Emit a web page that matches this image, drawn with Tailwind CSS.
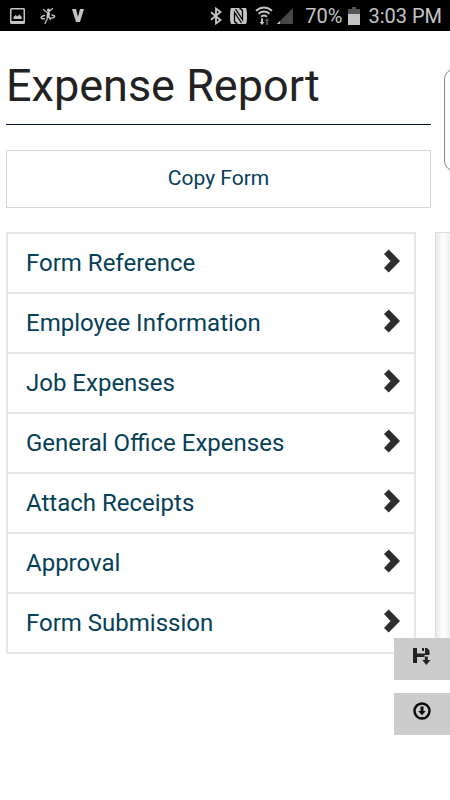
<!DOCTYPE html>
<html lang="en">
<head>
<meta charset="utf-8">
<meta name="viewport" content="width=device-width, initial-scale=1">
<title>Expense Report</title>
<script src="https://cdn.jsdelivr.net/npm/@tailwindcss/browser@4"></script>
</head>
<body class="min-h-screen bg-white font-['Roboto','Liberation_Sans',sans-serif] text-[#222]">
<svg class="hidden" aria-hidden="true">
  <symbol id="chevron" viewBox="0 0 16 24"><path d="M4.700 .5 16 12 4.700 23.500 0 18.900 6.500 12 0 5.100Z" fill="#2d2d2d"/></symbol>
</svg>

<header class="flex h-[31px] items-center justify-between bg-black pr-2 pl-2.5 text-[#c4c4c4]">
  <div class="flex items-center gap-[15px]">
    <svg class="h-4 w-[15px]" viewBox="0 0 15 16" aria-label="Picture"><path fill="currentColor" fill-rule="evenodd" d="M1.500 0h12Q15 0 15 1.500v13q0 1.500-1.500 1.500h-12Q0 16 0 14.500v-13Q0 0 1.500 0ZM1.500 1.500v11.500h12V1.500Z"/><path fill="currentColor" d="M3.500 11V9l2.200-2 1.600 1.500L9.500 6.500l2.200 2.500v2Z"/></svg>
    <svg class="h-[18px] w-4" viewBox="0 0 16 18" fill="none" stroke="currentColor" stroke-linecap="round" aria-label="Activity"><circle cx="8.500" cy="3" r="1.600" fill="currentColor" stroke="none"/><path stroke-width="1.200" d="M3.500 2.500 7.500 6l5-4.500M7.500 9.500l-.5 3-2 4M8.500 9.500l2 3"/><path stroke-width="3" d="M8.500 6.500 8 9.500"/><path stroke-width="1.400" d="M4.500 8.500C0 9.500 0 12 4.500 11.800M9.500 11.500C15 11 16.500 9 12 8"/></svg>
    <svg class="h-[15px] w-[14px]" viewBox="0 0 14 15" aria-label="V"><path d="M1 1h4l2 8 2-8h4L9 14H5Z" fill="currentColor"/></svg>
  </div>
  <div class="flex items-center">
    <svg class="mr-2 h-[18px] w-3" viewBox="0 0 12 18" fill="none" stroke="currentColor" stroke-width="1.800" aria-label="Bluetooth"><path d="M1 5.300 10.500 13 6 16.500v-15L10.500 5 1 12.700"/></svg>
    <svg class="mr-2 h-4 w-[17px]" viewBox="0 0 17 16" aria-label="NFC"><path fill="currentColor" d="M1 0h15q1 2 1 8t-1 8H1q-1-2-1-8t1-8Z"/><path fill="none" stroke="#000" stroke-width="1.300" d="M7.500 15.500Q4.500 15 4.500 12.500V4.500L11.500 15M9.500 .5Q12.500 1 12.500 3.500v8L5.500 1"/></svg>
    <svg class="mr-1 h-[19px] w-[18px]" viewBox="0 0 18 19" fill="none" stroke="currentColor" stroke-width="1.800" aria-label="Wi-Fi"><path d="M1 4.800q8-6.500 16 0M3.500 7.800q5.500-4.500 11 0M6 10.800q3-2.500 6 0"/><path fill="currentColor" stroke="none" d="M6 12.500h2V16h1.500L7 19l-2.500-3H6Z"/><path fill="#555" stroke="none" d="M11 19h2v-4h1.500L12 12l-2.500 3H11Z"/></svg>
    <svg class="mr-3 h-4 w-4" viewBox="0 0 16 16" aria-label="Signal"><path fill="#484848" d="M16 0v16H0Z"/><path fill="currentColor" d="M3 13v3H0Z"/></svg>
    <span class="text-xl leading-5">70%</span>
    <svg class="mr-2 ml-1.5 h-[18px] w-3" viewBox="0 0 12 18" aria-label="Battery"><path fill="#555" d="M4 0h4v2h4v5H0V2h4Z"/><path fill="currentColor" d="M0 7h12v11H0Z"/></svg>
    <time class="text-xl leading-5">3:03 PM</time>
  </div>
</header>

<main class="pt-7 pl-1.5">
  <section class="flex">
    <div class="min-w-0 flex-1">
      <h1 class="border-b border-[#06112e] pb-3 text-[45px] leading-[53px] whitespace-nowrap">Expense Report</h1>
      <button type="button" class="mt-[25px] block h-[58px] w-full cursor-pointer border border-[#d6d6d6] text-[21px] text-[#063e58]">Copy Form</button>
    </div>
    <div class="mt-2.5 ml-[13px] h-[102px] w-1.5 overflow-hidden"><div class="h-full w-8 rounded-[10px] border border-[#888]"></div></div>
  </section>

  <section class="mt-6 flex">
    <nav class="min-w-0 flex-1 border-2 border-[#e6e6e6]" aria-label="Form sections">
      <ul class="divide-y-2 divide-[#e6e6e6] text-2xl leading-[58px] text-[#063f58]">
        <li><a href="#reference" class="flex h-[58px] items-center justify-between pr-3.5 pl-[18px]">Form Reference<svg class="mb-1 h-6 w-4"><use href="#chevron"/></svg></a></li>
        <li><a href="#employee" class="flex h-[58px] items-center justify-between pr-3.5 pl-[18px]">Employee Information<svg class="mb-1 h-6 w-4"><use href="#chevron"/></svg></a></li>
        <li><a href="#job" class="flex h-[58px] items-center justify-between pr-3.5 pl-[18px]">Job Expenses<svg class="mb-1 h-6 w-4"><use href="#chevron"/></svg></a></li>
        <li><a href="#office" class="flex h-[58px] items-center justify-between pr-3.5 pl-[18px]">General Office Expenses<svg class="mb-1 h-6 w-4"><use href="#chevron"/></svg></a></li>
        <li><a href="#receipts" class="flex h-[58px] items-center justify-between pr-3.5 pl-[18px]">Attach Receipts<svg class="mb-1 h-6 w-4"><use href="#chevron"/></svg></a></li>
        <li><a href="#approval" class="flex h-[58px] items-center justify-between pr-3.5 pl-[18px]">Approval<svg class="mb-1 h-6 w-4"><use href="#chevron"/></svg></a></li>
        <li><a href="#submission" class="flex h-[58px] items-center justify-between pr-3.5 pl-[18px]">Form Submission<svg class="mb-1 h-6 w-4"><use href="#chevron"/></svg></a></li>
      </ul>
    </nav>
    <div class="ml-[19px] w-[15px] border-t border-l border-[#dcdcdc] bg-linear-to-r from-[#e8e8e8] via-white to-[#efefef]"></div>
  </section>
</main>

<div class="fixed right-0 bottom-[65px] flex flex-col gap-[13px]">
  <button type="button" aria-label="Save" class="flex h-[42px] w-14 cursor-pointer items-center justify-center bg-[#ccc] pb-1.5">
    <svg class="h-[18px] w-[18px]" viewBox="0 0 18 18"><path fill="#222" fill-rule="evenodd" d="M0 1h4v5.500h8V1h2L16.500 3.500V8h-5v2H4v6H0ZM9 1h2v3H9Z"/><path fill="#222" d="M11.800 9.500h3V13H17.500L13.300 18 9.300 13h2.500Z"/></svg>
  </button>
  <button type="button" aria-label="Scroll down" class="flex h-[42px] w-14 cursor-pointer items-center justify-center bg-[#ccc] pb-1.5">
    <svg class="h-[18px] w-[18px]" viewBox="0 0 18 18"><circle cx="9" cy="9" r="7.500" fill="none" stroke="#080808" stroke-width="2.400"/><path fill="#111" d="M7.500 4.500h3V9h2.300L9 13.200 5.200 9h2.300Z"/></svg>
  </button>
</div>
</body>
</html>
